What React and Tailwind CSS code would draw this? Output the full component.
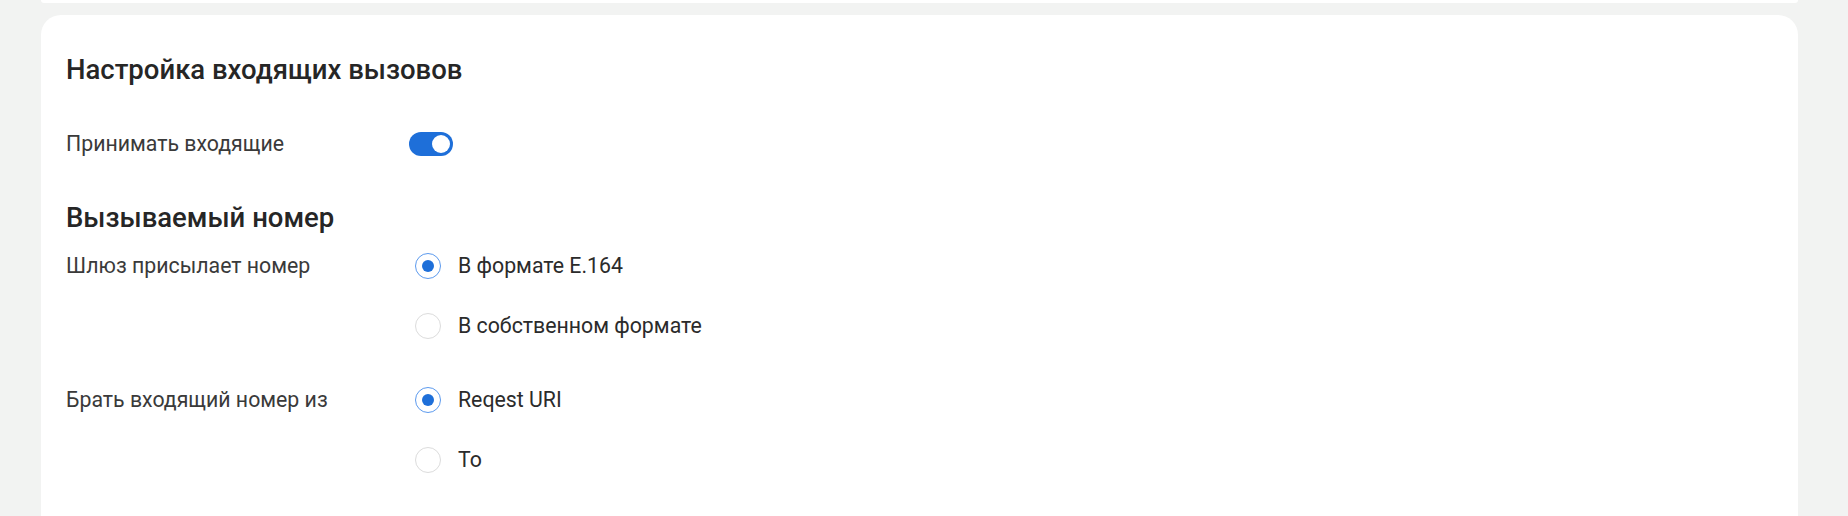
import { useState } from 'react'

function Toggle({ on, onChange }) {
  return (
    <button
      onClick={() => onChange(!on)}
      className={`flex h-[24px] w-[44px] items-center rounded-full px-[3px] ${on ? 'justify-end bg-[#1e6fd9]' : 'justify-start bg-[#c9ccd1]'}`}
    >
      <span className="block h-[18px] w-[18px] rounded-full bg-white" />
    </button>
  )
}

function Radio({ checked, label, onClick }) {
  return (
    <button onClick={onClick} className="flex h-[40px] items-center gap-[17px] text-left">
      {checked ? (
        <span className="flex h-[26px] w-[26px] items-center justify-center rounded-full border-[1.5px] border-[#5c9aee] bg-white">
          <span className="block h-[12px] w-[12px] rounded-full bg-[#1e6fd9]" />
        </span>
      ) : (
        <span className="block h-[26px] w-[26px] rounded-full border-[1.5px] border-[#dcdcdc] bg-white" />
      )}
      <span className="text-[21.3px] text-[#2b2b2b]">{label}</span>
    </button>
  )
}

function RadioRow({ label, options, value, onChange, className }) {
  return (
    <div className={`flex ${className}`}>
      <div className="flex h-[40px] w-[349px] shrink-0 items-center text-[21.3px] text-[#3a3a3a]">{label}</div>
      <div className="flex flex-col gap-[20px]">
        {options.map((o) => (
          <Radio key={o} label={o} checked={value === o} onClick={() => onChange(o)} />
        ))}
      </div>
    </div>
  )
}

export default function App() {
  const [incoming, setIncoming] = useState(true)
  const [format, setFormat] = useState('В формате E.164')
  const [source, setSource] = useState('Reqest URI')

  return (
    <div className="h-[516px] overflow-hidden bg-[#f2f3f2] pl-[41px] pr-[50px] font-['Roboto',sans-serif]">
      <div className="h-[3px] rounded-b-[20px] bg-white" />
      <div className="mt-[12px] h-[600px] rounded-t-[20px] bg-white px-[25px] pt-[39px]">
        <h1 className="h-[32px] text-[27.5px] font-medium leading-[32px] text-[#262626]">
          Настройка входящих вызовов
        </h1>

        <div className="mt-[38px] flex h-[40px] items-center">
          <div className="w-[343px] shrink-0 text-[21.3px] text-[#3a3a3a]">Принимать входящие</div>
          <Toggle on={incoming} onChange={setIncoming} />
        </div>

        <h2 className="mt-[38px] h-[32px] text-[27.5px] font-medium leading-[32px] text-[#262626]">
          Вызываемый номер
        </h2>

        <RadioRow
          className="mt-[12px]"
          label="Шлюз присылает номер"
          options={['В формате E.164', 'В собственном формате']}
          value={format}
          onChange={setFormat}
        />

        <RadioRow
          className="mt-[34px]"
          label="Брать входящий номер из"
          options={['Reqest URI', 'To']}
          value={source}
          onChange={setSource}
        />
      </div>
    </div>
  )
}
